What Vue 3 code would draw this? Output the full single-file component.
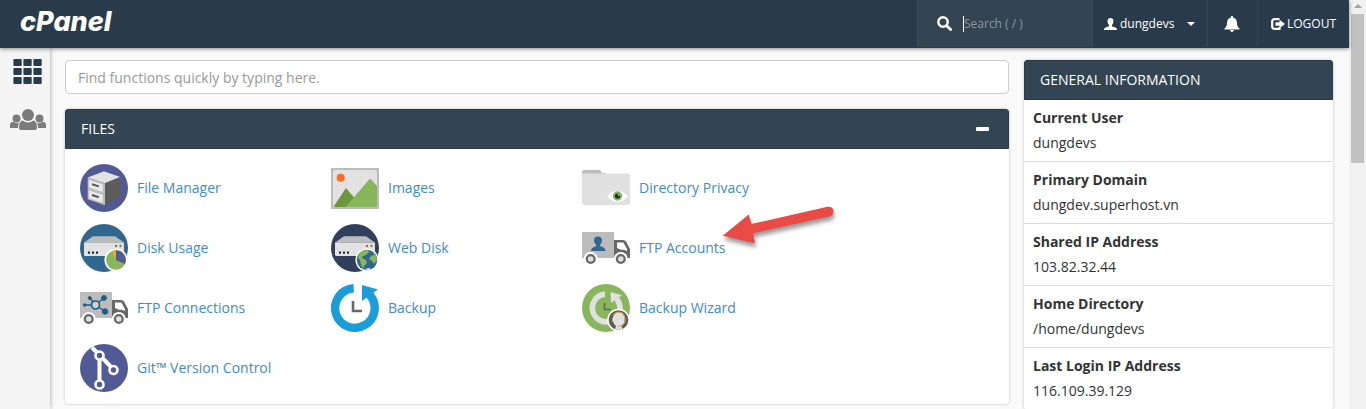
<template>
  <div class="window">
    <div class="page">
      <header class="topbar">
        <a class="brand" href="#">cPanel</a>
        <div class="topbar-nav">
          <label class="search">
            <svg class="search-icon" viewBox="0 0 15 15" aria-hidden="true">
              <circle cx="6" cy="6" r="4.7" fill="none" stroke="#fff" stroke-width="2.4" />
              <path d="M9.4 9.4L13.6 13.6" stroke="#fff" stroke-width="2.8" stroke-linecap="round" />
            </svg>
            <input v-model="search" type="text" placeholder="Search ( / )" aria-label="Search">
          </label>
          <button class="nav-item user" type="button">
            <svg class="user-icon" viewBox="0 0 13 12" aria-hidden="true">
              <path d="M6.5 0C8.6 0 9.6 1.5 9.5 3.4C9.4 5 8.7 6 8 6.8V8.2C9.5 9 12.6 9.3 13 11V12H0V11C.4 9.3 3.5 9 5 8.2V6.8C4.3 6 3.6 5 3.5 3.4C3.4 1.5 4.4 0 6.5 0Z" fill="#fff" />
            </svg>
            <span>dungdevs</span>
            <span class="caret"></span>
          </button>
          <button class="nav-item bell" type="button" aria-label="Notifications">
            <svg class="bell-icon" viewBox="0 0 16 16" aria-hidden="true">
              <path d="M8 0C8.8 0 9.2.6 9.1 1.4C11.6 2 12.9 4 12.9 6.6C12.9 10 14 11.4 15.6 12.7V13.4H.4V12.7C2 11.4 3.1 10 3.1 6.6C3.1 4 4.4 2 6.9 1.4C6.8.6 7.2 0 8 0ZM6 14.1H10C9.9 15.2 9.1 16 8 16C6.900 16 6.1 15.2 6 14.1Z" fill="#fff" />
            </svg>
          </button>
          <a class="nav-item logout" href="#">
            <svg class="logout-icon" viewBox="0 0 14 12" aria-hidden="true">
              <path d="M8.500 1.200H3.500Q1.200 1.200 1.200 3.500V8.500Q1.200 10.800 3.500 10.800H8.500V9" fill="none" stroke="#fff" stroke-width="2.200" />
              <path d="M4.500 4.300H8.500V1.700L14 6L8.500 10.300V7.700H4.500Z" fill="#fff" />
            </svg>
            <span>LOGOUT</span>
          </a>
        </div>
      </header>

      <div class="body">
        <nav class="sidebar">
          <a href="#" aria-label="Home">
            <svg class="side-icon" viewBox="0 0 36 26" aria-hidden="true">
              <g fill="#293a4a">
                <template v-for="row in 3" :key="row">
                  <rect v-for="col in 3" :key="col" :x="col * 10 - 6.6" :y="row * 9 - 9" width="8.3" height="7" rx="1" />
                </template>
              </g>
            </svg>
          </a>
          <a href="#" aria-label="User Manager">
            <svg class="side-icon" viewBox="0 0 36 26" aria-hidden="true">
              <g fill="#7b7b7b">
                <circle cx="6.5" cy="9.500" r="4" />
                <circle cx="29.5" cy="9.500" r="4" />
                <path d="M0 19V16Q0 13 3 13H4Q6.5 15.4 9.5 13.5Q8 15 8 19Z" />
                <path d="M36 19V16Q36 13 33 13H32Q29.5 15.4 26.5 13.5Q28 15 28 19Z" />
                <circle cx="18" cy="6" r="6" />
                <path d="M9 19Q9 12 12.5 11.5Q18 15.6 23.5 11.5Q27 12 27 19Q27 21 25 21H11Q9 21 9 19Z" />
              </g>
            </svg>
          </a>
        </nav>

        <main class="content">
          <div class="main-col">
            <input v-model="filter" class="quick-find" type="text" placeholder="Find functions quickly by typing here." aria-label="Find functions">

            <section class="panel">
              <div class="panel-head">
                <h2>FILES</h2>
                <button class="collapse" type="button" aria-label="Collapse" @click="opened = !opened">
                  <span></span>
                </button>
              </div>
              <div v-if="opened" class="items">
                <a v-for="item in items" :key="item.icon" class="item" href="#">
                  <svg class="item-icon" viewBox="0 0 48 48" aria-hidden="true">
                    <g v-if="item.icon === 'file-manager'">
                      <circle cx="24" cy="24" r="24" fill="#515a94" />
                      <path d="M7.7 13.5L24 7.3L40.3 13L25 19.3Z" fill="#e2e2e2" />
                      <path d="M25 19.3L40.3 13V32.7L25 41.3Z" fill="#5c5c5c" />
                      <path d="M7.7 13.5L25 19.3V41.3L7.7 35.3Z" fill="#bcbcbc" />
                      <path d="M9 16L22.7 20.4V27.9L9 23.6ZM9 26.4L22.7 30.8V38.7L9 34.2Z" fill="#e9e9e9" />
                      <path d="M12 20.2L18.8 22.4M12 31L18.8 33.2" stroke="#575757" stroke-width="2" />
                    </g>

                    <g v-else-if="item.icon === 'images'">
                      <rect y="4" width="48" height="41" fill="#bcbcbc" />
                      <rect x="2" y="6" width="44" height="37" rx="2" fill="#e2e2e2" />
                      <circle cx="9.7" cy="13.8" r="4" fill="#ff6c1c" />
                      <path d="M3 42L15 24L26 37L22 43H4Z" fill="#6c983b" />
                      <path d="M15 42.5L39 14.5L46 22V41Q46 43 44 43H15Z" fill="#87b65b" />
                    </g>

                    <g v-else-if="item.icon === 'privacy'">
                      <path d="M0 12V8Q0 6 2 6H17Q19 6 20 9H24V12Z" fill="#bcbcbc" />
                      <path d="M0 9.5H46Q48 9.5 48 11.5V39Q48 41 46 41H2Q0 41 0 39Z" fill="#e0e0e0" />
                      <path d="M25 32.5Q35.5 21 46 32.5Q35.5 43 25 32.5Z" fill="#fff" />
                      <circle cx="35.5" cy="32" r="4.7" fill="#87b65b" />
                      <circle cx="35.5" cy="32" r="2.6" fill="#222c3a" />
                      <circle cx="36.8" cy="30.8" r="1.2" fill="#87b65b" />
                    </g>

                    <g v-else-if="item.icon === 'disk-usage' || item.icon === 'web-disk'">
                      <circle cx="24" cy="24" r="24" :fill="item.icon === 'web-disk' ? '#303f5b' : '#31668f'" />
                      <path d="M13 12.3H35L44 18.5H4Z" fill="#bcbcbc" />
                      <path d="M4 18.5H44V30.5Q44 32 42.5 32H5.5Q4 32 4 30.5Z" fill="#e2e2e2" />
                      <path d="M8 27.5H10V29.7H8ZM12 27.5H14V29.7H12ZM16 27.5H18V29.7H16Z" fill="#222c3a" />
                      <circle cx="36" cy="22" r="1.2" fill="#dc4b3e" />
                      <circle cx="40.5" cy="22" r="1.2" fill="#6c983b" />
                      <circle cx="36" cy="36" r="11.6" fill="#fff" />
                      <g v-if="item.icon === 'disk-usage'">
                        <circle cx="36" cy="36" r="9.8" fill="#87b65b" />
                        <path d="M36 36V26.2A9.8 9.8 0 0 1 45 40Z" fill="#515a94" />
                        <path d="M36 36L32 27A9.8 9.8 0 0 1 36 26.2Z" fill="#f0a92e" />
                      </g>
                      <g v-else>
                        <circle cx="36" cy="36" r="10.2" fill="#31668f" />
                        <path d="M28 30Q31 26 37 26L38 28L35 31L32 32L31 34L35 36L36 39L33 42L32 45Q29 40 29 36L27 34ZM42 28Q46 31 46 36L43 40L41 37L38 35L40 32L43 31Z" fill="#87b65b" />
                        <path d="M34 45L38 44L40 45Q37 47 34 45Z" fill="#e2e2e2" />
                      </g>
                    </g>

                    <g v-else-if="item.icon === 'ftp-accounts' || item.icon === 'ftp-connections'">
                      <path d="M0 9Q0 8 1 8H31Q32 8 32 9V34H0Z" fill="#bcbcbc" />
                      <path d="M32 16H41Q43 16 44 17.5L48 25V34H32Z" fill="#686868" />
                      <path d="M35 18.5H41.3L45 25V27L42 25.7H39L35 24Z" fill="#fff" />
                      <circle cx="8.7" cy="35" r="7" fill="#fff" />
                      <circle cx="38.8" cy="35" r="7" fill="#fff" />
                      <circle cx="8.7" cy="35" r="3.9" fill="#e0e0e0" stroke="#686868" stroke-width="2.3" />
                      <circle cx="38.8" cy="35" r="3.9" fill="#e0e0e0" stroke="#686868" stroke-width="2.3" />
                      <path v-if="item.icon === 'ftp-accounts'" d="M16 12.5Q20.2 12.5 20 17Q19.7 19.5 18 21V22Q23.5 23.5 23.5 27H9Q9 23.5 14.2 22V21Q12.3 19.5 12 17Q11.8 12.5 16 12.5Z" fill="#31668f" />
                      <g v-else fill="#1b5e83" stroke="#1b5e83">
                        <path d="M4.5 21H11M10 14L13 18M19 18L24 14M19 23.5L25 27" stroke-width="1.3" />
                        <circle cx="15.5" cy="21" r="4" fill="#d0d0d0" stroke-width="1.7" />
                        <circle cx="4.7" cy="21" r="1.3" />
                        <circle cx="9.7" cy="14" r="1.5" />
                        <circle cx="24" cy="14" r="2.4" />
                        <circle cx="25" cy="27.5" r="2.7" />
                      </g>
                    </g>

                    <g v-else-if="item.icon === 'backup'">
                      <path d="M22.7 4.2A19.8 19.8 0 1 0 38.5 10.6" fill="none" stroke="#1a9ddb" stroke-width="8.4" />
                      <path d="M31 1L47 5.5L31 17Z" fill="#1a9ddb" />
                      <path d="M22 17V27H31" fill="none" stroke="#686868" stroke-width="2.6" />
                    </g>

                    <g v-else-if="item.icon === 'wizard'">
                      <circle cx="24" cy="24" r="24" fill="#87b65b" />
                      <path d="M23 10.2A13.8 13.8 0 1 0 34.5 14.8" fill="none" stroke="#e0e0e0" stroke-width="5.7" />
                      <path d="M28.5 8L40 11.2L29 19Z" fill="#e0e0e0" />
                      <path d="M22.5 19V25.5H29" fill="none" stroke="#686868" stroke-width="1.7" />
                      <circle cx="36.5" cy="36" r="11.3" fill="#fff" />
                      <circle cx="36.5" cy="36" r="9.8" fill="#5c5c5c" />
                      <ellipse cx="36.8" cy="35.5" rx="6" ry="7.3" fill="#e0e0e0" />
                      <path d="M33 45L34.500 41H39L40.500 45Q36.500 46.500 33 45Z" fill="#e0e0e0" />
                      <path d="M31 32Q32 28 36.5 28Q42.5 28 43 34V38Q41.5 42 36 42.500M30.500 34V38" fill="none" stroke="#dda13c" stroke-width="1" />
                    </g>

                    <g v-else>
                      <circle cx="24" cy="24" r="24" fill="#515a94" />
                      <path d="M12 3.5L19.5 11L33.5 25.5M19.5 11V40.5" fill="none" stroke="#fff" stroke-width="4" />
                      <g fill="#515a94" stroke="#fff" stroke-width="2.6">
                        <circle cx="19.5" cy="11.5" r="4" />
                        <circle cx="33.5" cy="26" r="4" />
                        <circle cx="19.5" cy="40.5" r="4" />
                      </g>
                    </g>
                  </svg>
                  <span>{{ item.name }}</span>
                  <svg v-if="item.pointed" class="arrow" viewBox="0 0 126 60" aria-hidden="true">
                    <path d="M7.7 40.7L33.7 19.5L36.5 29L112.5 11.8Q118 11.5 118.5 16Q118.8 20 115 21.3L38 38.3L40 48.3Z" fill="#e94b44" />
                  </svg>
                </a>
              </div>
            </section>
          </div>

          <aside class="info">
            <h2 class="panel-head">GENERAL INFORMATION</h2>
            <dl>
              <div v-for="row in info" :key="row.label" class="info-row">
                <dt>{{ row.label }}</dt>
                <dd>{{ row.value }}</dd>
              </div>
            </dl>
          </aside>
        </main>
      </div>
    </div>

    <div class="scrollbar" aria-hidden="true">
      <span class="scroll-up"></span>
      <span class="scroll-thumb"></span>
    </div>
  </div>
</template>

<script setup>
import { ref } from 'vue';

const search = ref('');
const filter = ref('');
const opened = ref(true);

const items = [
  { name: 'File Manager', icon: 'file-manager' },
  { name: 'Images', icon: 'images' },
  { name: 'Directory Privacy', icon: 'privacy' },
  { name: 'Disk Usage', icon: 'disk-usage' },
  { name: 'Web Disk', icon: 'web-disk' },
  { name: 'FTP Accounts', icon: 'ftp-accounts', pointed: true },
  { name: 'FTP Connections', icon: 'ftp-connections' },
  { name: 'Backup', icon: 'backup' },
  { name: 'Backup Wizard', icon: 'wizard' },
  { name: 'Git™ Version Control', icon: 'git' },
];

const info = [
  { label: 'Current User', value: 'dungdevs' },
  { label: 'Primary Domain', value: 'dungdev.superhost.vn' },
  { label: 'Shared IP Address', value: '103.82.32.44' },
  { label: 'Home Directory', value: '/home/dungdevs' },
  { label: 'Last Login IP Address', value: '116.109.39.129' },
];
</script>

<style>
body {
  margin: 0;
  background: #fafafa;
}
</style>

<style scoped>
* {
  box-sizing: border-box;
}

.window {
  display: flex;
  height: 100vh;
  overflow: hidden;
  font-family: "Open Sans", sans-serif;
  font-size: 14px;
  line-height: 20px;
  color: #333;
}

.page {
  display: flex;
  flex-direction: column;
  flex: 1;
  min-width: 0;
}

a {
  text-decoration: none;
}

button {
  padding: 0;
  border: 0;
  background: none;
  font: inherit;
  cursor: pointer;
}

h2 {
  margin: 0;
  font-size: 14px;
  font-weight: 400;
}

.topbar {
  position: relative;
  z-index: 2;
  display: flex;
  flex: none;
  justify-content: space-between;
  height: 48px;
  background: #293a4a;
  box-shadow: 0 1px 4px rgba(0, 0, 0, 0.45);
}

.brand {
  padding: 8px 20px;
  color: #fff;
  font-family: Inter, sans-serif;
  font-size: 27px;
  font-style: italic;
  font-weight: 800;
  line-height: 28px;
}

.topbar-nav {
  display: flex;
  height: 47px;
  font-size: 12px;
}

.search {
  display: flex;
  align-items: center;
  width: 176px;
  padding: 0 19px;
  gap: 11px;
  border: solid #3b4b5b;
  border-width: 0 1px;
  background: #354453;
}

.search-icon {
  flex: none;
  width: 15px;
  height: 15px;
}

.search input {
  width: 100%;
  height: 16px;
  padding: 0;
  border: 0;
  border-left: 1px solid #fff;
  outline: 0;
  background: none;
  color: #fff;
  font: inherit;
}

.search input::placeholder {
  color: #8f9499;
}

.nav-item {
  display: flex;
  align-items: center;
  color: #fff;
  font-weight: 400;
}

.user {
  width: 114px;
  padding-left: 11px;
  gap: 3px;
}

.user-icon {
  width: 13px;
  height: 12px;
}

.caret {
  margin-left: 10px;
  border: 4px solid transparent;
  border-top-color: #fff;
  border-bottom: 0;
}

.bell {
  justify-content: center;
  width: 51px;
  border: solid #35475a;
  border-width: 0 1px;
}

.bell-icon {
  width: 16px;
  height: 16px;
}

.logout {
  padding: 0 13px;
  gap: 2px;
}

.logout-icon {
  width: 14px;
  height: 12px;
}

.body {
  display: flex;
  flex: 1;
  min-height: 0;
}

.sidebar {
  position: relative;
  z-index: 1;
  display: flex;
  flex: none;
  flex-direction: column;
  align-items: center;
  width: 50px;
  padding: 11px 0 0 5px;
  gap: 24px;
  background: #f4f4f4;
  box-shadow: 0 0 5px rgba(0, 0, 0, 0.35);
}

.side-icon {
  display: block;
  width: 36px;
  height: 26px;
}

.content {
  display: flex;
  flex: 1;
  align-items: flex-start;
  min-width: 0;
  padding: 12px 16px 15px 15px;
  gap: 15px;
  background: #fafafa;
}

.main-col {
  flex: 1;
  min-width: 0;
}

.quick-find {
  display: block;
  width: 100%;
  height: 34px;
  margin-bottom: 15px;
  padding: 6px 12px;
  border: 1px solid #ccc;
  border-radius: 4px;
  background: #fff;
  color: #555;
  font: inherit;
}

.quick-find::placeholder {
  color: #999;
}

.panel,
.info {
  border-radius: 4px;
  background: #fff;
  box-shadow: 0 0 3px rgba(0, 0, 0, 0.25);
}

.panel-head {
  display: flex;
  align-items: center;
  justify-content: space-between;
  height: 40px;
  padding: 0 15px;
  border: 1px solid #293a4a;
  border-radius: 3px 3px 0 0;
  background: #334452;
  color: #fff;
}

.collapse {
  padding: 8px 4px;
}

.collapse span {
  display: block;
  width: 13px;
  height: 4px;
  border-radius: 1px;
  background: #fff;
}

.items {
  display: grid;
  grid-template-columns: repeat(auto-fill, 251px);
  padding: 15px 15px 12px;
  row-gap: 12px;
}

.item {
  position: relative;
  display: flex;
  align-items: center;
  gap: 9px;
  color: #428bca;
}

.item-icon {
  flex: none;
  width: 48px;
  height: 48px;
}

.arrow {
  position: absolute;
  z-index: 1;
  top: -29px;
  left: 133px;
  width: 126px;
  height: 60px;
  filter: drop-shadow(1px 4px 2px rgba(0, 0, 0, 0.4));
}

.info {
  flex: none;
  width: 309px;
}

.info dl {
  margin: 0;
}

.info-row {
  padding: 5px 9px 6px;
  border-bottom: 1px solid #ddd;
  line-height: 25px;
}

.info dt {
  font-weight: 700;
}

.info dd {
  margin: 0;
}

.scrollbar {
  display: flex;
  flex: none;
  flex-direction: column;
  align-items: center;
  width: 17px;
  gap: 6px;
  padding-top: 4px;
  background: #f1f1f1;
}

.scroll-up {
  border: 4px solid transparent;
  border-top: 0;
  border-bottom-color: #a3a3a3;
}

.scroll-thumb {
  width: 13px;
  height: 149px;
  background: #c1c1c1;
}
</style>
